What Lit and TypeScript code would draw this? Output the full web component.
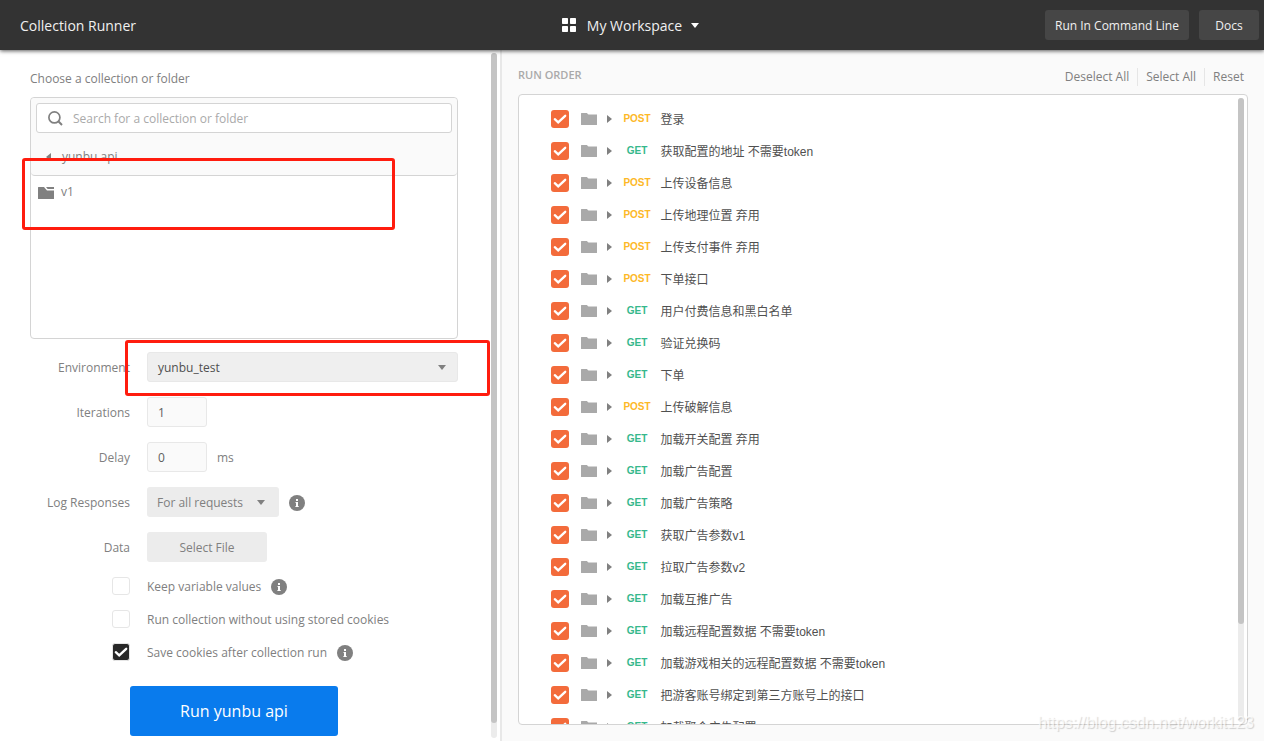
import { LitElement, html, css, svg } from "lit";
import { customElement } from "lit/decorators.js";

const METHODS = { P: "POST", G: "GET" } as const;

const requests: [keyof typeof METHODS, string][] = [
  ["P", "登录"],
  ["G", "获取配置的地址 不需要token"],
  ["P", "上传设备信息"],
  ["P", "上传地理位置 弃用"],
  ["P", "上传支付事件 弃用"],
  ["P", "下单接口"],
  ["G", "用户付费信息和黑白名单"],
  ["G", "验证兑换码"],
  ["G", "下单"],
  ["P", "上传破解信息"],
  ["G", "加载开关配置 弃用"],
  ["G", "加载广告配置"],
  ["G", "加载广告策略"],
  ["G", "获取广告参数v1"],
  ["G", "拉取广告参数v2"],
  ["G", "加载互推广告"],
  ["G", "加载远程配置数据 不需要token"],
  ["G", "加载游戏相关的远程配置数据 不需要token"],
  ["G", "把游客账号绑定到第三方账号上的接口"],
  ["G", "加载聚合广告配置"],
];

const tick = svg`<path d="M3.8 9.2 L7.2 12.4 L14.2 5.8" fill="none" stroke="#fff" stroke-width="2.3" stroke-linecap="round"/>`;

const infoIcon = html`<svg class="info" width="16" height="16" viewBox="0 0 16 16">
  <circle cx="8" cy="8" r="8" fill="#808080" />
  <path d="M7 4h2v2H7zM6.5 7H9v4h.7v1H6.4v-1H7V8h-.5z" fill="#fff" />
</svg>`;

const caret = (color: string) => html`<svg class="caret" width="8" height="5" viewBox="0 0 8 5">
  <path d="M0 0h8L4 5z" fill=${color} />
</svg>`;

@customElement("app-root")
export class AppRoot extends LitElement {
  static styles = css`
    :host {
      display: flex;
      flex-direction: column;
      position: relative;
      height: 741px;
      overflow: hidden;
      font: 12px/18px "Open Sans", "Noto Sans CJK SC", sans-serif;
      color: #808080;
      background: #fff;
    }
    * { box-sizing: border-box; }
    svg { display: block; flex: none; }
    .top {
      display: grid;
      grid-template-columns: 1fr auto 1fr;
      align-items: center;
      flex: none;
      height: 50px;
      padding: 0 5px 0 20px;
      background: #333;
      color: #f0f0f0;
      box-shadow: 0 1px 4px rgba(0, 0, 0, 0.65);
      z-index: 1;
    }
    .title { font-size: 14px; padding-top: 2px; }
    .workspace { display: flex; align-items: center; font-size: 14px; padding-right: 18px; }
    .workspace .name { padding: 2px 9px 0 11px; }
    .actions { display: flex; justify-content: flex-end; gap: 10px; }
    .dark {
      height: 30px;
      border-radius: 3px;
      background: #464646;
      display: flex;
      align-items: center;
      justify-content: center;
      padding-top: 2px;
    }
    .cli { width: 144px; }
    .docs { width: 60px; }
    .body { display: flex; flex: 1; min-height: 0; }
    .left { display: flex; width: 502px; border-right: 2px solid #e8e8e8; }
    .form { width: 491px; padding: 20px 33px 0 30px; }
    .bar { width: 6px; border-radius: 3px; background: #ececec; flex: none; }
    .thumb { border-radius: 3px; background: #c4c4c4; }
    .left .bar { height: 685px; margin-top: 3px; }
    .left .thumb { height: 670px; }
    .picker {
      height: 242px;
      width: 428px;
      margin-top: 9px;
      border: 1px solid #d4d4d4;
      border-radius: 4px;
    }
    .pickhead {
      height: 78px;
      padding: 5px;
      background: #fafafa;
      border-bottom: 1px solid #d4d4d4;
      border-radius: 4px;
    }
    .search {
      display: flex;
      align-items: center;
      height: 30px;
      border: 1px solid #d4d4d4;
      border-radius: 3px;
      background: #fff;
      color: #aaa;
      padding-left: 11px;
      gap: 10px;
    }
    .search span { padding-top: 2px; }
    .crumb { display: flex; align-items: center; padding: 15px 0 0 10px; gap: 11px; }
    .folder { display: flex; align-items: center; padding: 7px 0 0 7px; gap: 7px; }
    .folder svg { margin-top: 2px; }
    .row { display: flex; align-items: center; height: 30px; margin-bottom: 15px; }
    .first { margin-top: 13px; }
    .label { width: 100px; text-align: right; margin-right: 17px; }
    .row .label, .ms, .select span, .field { padding-top: 1px; }
    .info { margin-top: 2px; }
    .select {
      display: flex;
      align-items: center;
      justify-content: space-between;
      height: 30px;
      border-radius: 3px;
      background: #ececec;
      padding: 0 14px 0 10px;
    }
    .env { width: 311px; background: #efefef; border: 1px solid #e8e8e8; color: #505050; padding-right: 11px; }
    .log { width: 132px; margin-right: 10px; }
    .field {
      width: 60px;
      height: 30px;
      border: 1px solid #e8e8e8;
      border-radius: 3px;
      background: #fafafa;
      display: flex;
      align-items: center;
      padding-left: 10px;
      color: #606060;
    }
    .ms { margin-left: 10px; }
    .file { width: 120px; justify-content: center; padding: 0; }
    .check { display: flex; align-items: center; height: 18px; margin: 0 0 15px 82px; }
    .check span { margin: 1px 10px 0 17px; }
    .box { width: 18px; height: 18px; border: 1px solid #e6e6e6; border-radius: 3px; flex: none; }
    .on { background: #282828; }
    .on svg { margin: -1px; }
    .run {
      width: 208px;
      height: 50px;
      margin: 25px 0 0 100px;
      border-radius: 3px;
      background: #097bed;
      color: #fff;
      font-size: 16px;
      display: flex;
      align-items: center;
      justify-content: center;
    }
    .right {
      flex: 1;
      display: flex;
      flex-direction: column;
      background: #fafafa;
      padding: 0 16px 16px;
    }
    .righthead { display: flex; justify-content: space-between; height: 44px; padding-top: 16px; }
    .order { font-size: 11px; font-weight: 600; color: #aaa; }
    .links { display: flex; height: 20px; padding: 2px 4px 0 0; }
    .links span { line-height: 18px; }
    .links span + span { border-left: 1px solid #e6e6e6; margin-left: 8px; padding-left: 8px; }
    .panel {
      display: flex;
      flex: 1;
      min-height: 0;
      background: #fff;
      border: 1px solid #d4d4d4;
      border-radius: 4px;
      padding: 3px 3px 0 32px;
    }
    .list { flex: 1; overflow: hidden; padding-top: 5px; }
    .item { display: flex; align-items: center; height: 32px; }
    .item .pick { margin-right: 12px; }
    .item .tri { margin-left: 10px; }
    .method {
      width: 50px;
      text-align: center;
      font: bold 10px/14px "Liberation Sans", Arial, sans-serif;
    }
    .POST { color: #fdb827; }
    .GET { color: #36b88c; }
    .name { white-space: pre; }
    .item .name {
      font: 12px/18px "Liberation Sans", "Noto Sans CJK SC", sans-serif;
      color: #505050;
      margin-left: -1.5px;
      padding-top: 2px;
    }
    .right .thumb { height: 526px; }
    .right .bar { height: 624px; }
    .mark { position: absolute; border: 3px solid #ff1c0e; border-radius: 3px; z-index: 2; }
    .m1 { left: 22px; top: 158px; width: 373px; height: 72px; }
    .m2 { left: 125px; top: 340px; width: 365px; height: 56px; }
    .watermark {
      position: absolute;
      right: 10px;
      bottom: 8px;
      font: 16px/20px "Liberation Sans", Arial, sans-serif;
      color: rgba(255, 255, 255, 0.7);
      text-shadow: 1px 1px 1px rgba(0, 0, 0, 0.17);
    }
  `;

  private item([m, name]: [keyof typeof METHODS, string]) {
    return html`<div class="item">
      <svg class="pick" width="18" height="18" viewBox="0 0 18 18">
        <rect width="18" height="18" rx="3" fill="#f36b3b" />${tick}
      </svg>
      <svg width="16" height="12" viewBox="0 0 16 12">
        <path d="M6 1h10v2H6z" fill="#d4d4d4" />
        <path d="M0 .5Q0 0 .5 0H6l1.5 2H16v9.5q0 .5-.5.5H.5q-.5 0-.5-.5z" fill="#a9a9a9" />
      </svg>
      <svg class="tri" width="5" height="8" viewBox="0 0 5 8"><path d="M0 0l5 4-5 4z" fill="#808080" /></svg>
      <span class="method ${METHODS[m]}">${METHODS[m]}</span>
      <span class="name">${name}</span>
    </div>`;
  }

  render() {
    return html`
      <header class="top">
        <div class="title">Collection Runner</div>
        <div class="workspace">
          <svg width="14" height="14" viewBox="0 0 14 14" fill="#fff">
            <rect width="6" height="6" rx=".7" /><rect x="8" width="6" height="6" rx=".7" />
            <rect y="8" width="6" height="6" rx=".7" /><rect x="8" y="8" width="6" height="6" rx=".7" />
          </svg>
          <span class="name">My Workspace</span>${caret("#fff")}
        </div>
        <div class="actions">
          <div class="dark cli">Run In Command Line</div>
          <div class="dark docs">Docs</div>
        </div>
      </header>
      <div class="body">
        <section class="left">
          <div class="form">
            <div>Choose a collection or folder</div>
            <div class="picker">
              <div class="pickhead">
                <div class="search">
                  <svg width="15" height="15" viewBox="0 0 15 15" fill="none" stroke="#808080" stroke-width="1.7">
                    <circle cx="6.4" cy="6.4" r="5.5" /><path d="M10.3 10.3L14 14" stroke-width="2" />
                  </svg>
                  <span>Search for a collection or folder</span>
                </div>
                <div class="crumb">
                  <svg width="5" height="8" viewBox="0 0 5 8"><path d="M5 0L0 4l5 4z" fill="#808080" /></svg>
                  <span>yunbu api</span>
                </div>
              </div>
              <div class="folder">
                <svg width="16" height="12" viewBox="0 0 16 12" fill="#808080">
                  <path d="M8 0h8v2H9.6z" />
                  <path d="M0 .5Q0 0 .5 0H6l3 3.5h7v8q0 .5-.5.5H.5q-.5 0-.5-.5z" />
                </svg>
                <span>v1</span>
              </div>
            </div>
            <div class="row first"><span class="label">Environment</span>
              <div class="select env"><span>yunbu_test</span>${caret("#808080")}</div></div>
            <div class="row"><span class="label">Iterations</span><div class="field">1</div></div>
            <div class="row"><span class="label">Delay</span><div class="field">0</div><span class="ms">ms</span></div>
            <div class="row"><span class="label">Log Responses</span>
              <div class="select log"><span>For all requests</span>${caret("#808080")}</div>${infoIcon}</div>
            <div class="row"><span class="label">Data</span><div class="select file"><span>Select File</span></div></div>
            <div class="check"><div class="box"></div><span>Keep variable values</span>${infoIcon}</div>
            <div class="check"><div class="box"></div><span>Run collection without using stored cookies</span></div>
            <div class="check"><div class="box on"><svg width="18" height="18" viewBox="0 0 18 18">${tick}</svg></div>
              <span>Save cookies after collection run</span>${infoIcon}</div>
            <div class="run">Run yunbu api</div>
          </div>
          <div class="bar"><div class="thumb"></div></div>
        </section>
        <section class="right">
          <div class="righthead">
            <span class="order">RUN ORDER</span>
            <div class="links"><span>Deselect All</span><span>Select All</span><span>Reset</span></div>
          </div>
          <div class="panel">
            <div class="list">${requests.map((r) => this.item(r))}</div>
            <div class="bar"><div class="thumb"></div></div>
          </div>
        </section>
      </div>
      <div class="mark m1"></div>
      <div class="mark m2"></div>
      <div class="watermark">https://blog.csdn.net/workit123</div>
    `;
  }
}
